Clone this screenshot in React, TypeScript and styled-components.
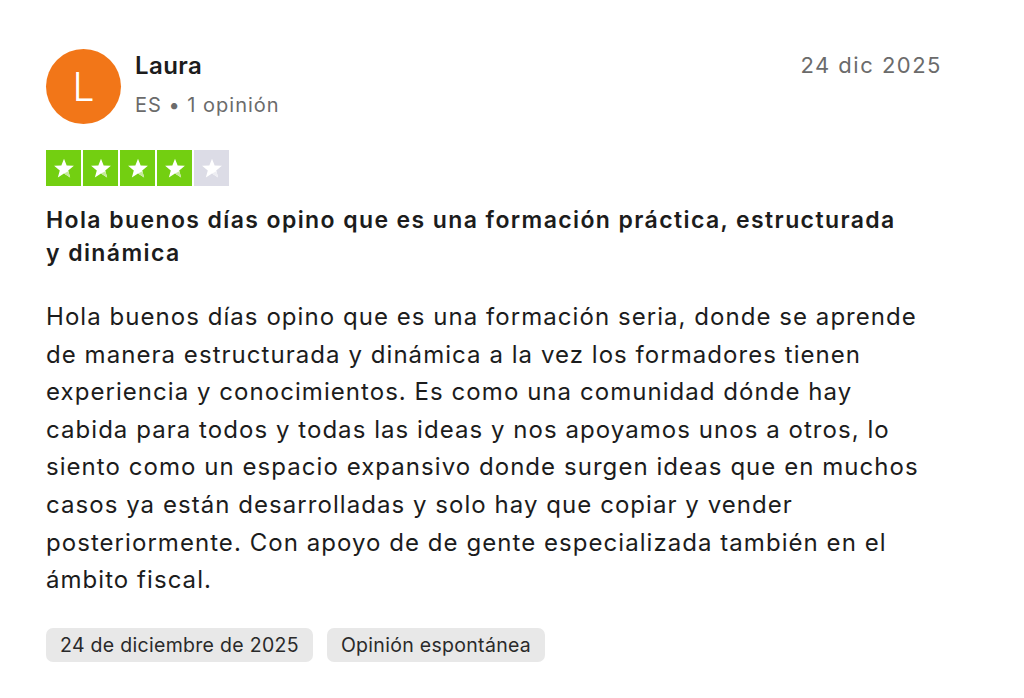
import styled, { createGlobalStyle } from "styled-components";

const GlobalStyle = createGlobalStyle`
  html, body {
    margin: 0;
    padding: 0;
    background: #fff;
  }
  body {
    font-family: Inter, "Noto Sans", "Liberation Sans", sans-serif;
    color: #1c1c1c;
  }
`;

const review = {
  name: "Laura",
  country: "ES",
  count: "1 opinión",
  date: "24 dic 2025",
  rating: 4,
  title: "Hola buenos días opino que es una formación práctica, estructurada y dinámica",
  body:
    "Hola buenos días opino que es una formación seria, donde se aprende de manera estructurada y dinámica a la vez los formadores tienen experiencia y conocimientos. Es como una comunidad dónde hay cabida para todos y todas las ideas y nos apoyamos unos a otros, lo siento como un espacio expansivo donde surgen ideas que en muchos casos ya están desarrolladas y solo hay que copiar y vender posteriormente. Con apoyo de de gente especializada también en el ámbito fiscal.",
  tags: ["24 de diciembre de 2025", "Opinión espontánea"],
};

export default function App() {
  return (
    <>
      <GlobalStyle />
      <Card>
        <Header>
          <Avatar>L</Avatar>
          <UserInfo>
            <Name>{review.name}</Name>
            <Meta>
              {review.country} • {review.count}
            </Meta>
          </UserInfo>
          <DateText>{review.date}</DateText>
        </Header>
        <Stars rating={review.rating} />
        <Title>{review.title}</Title>
        <Body>{review.body}</Body>
        <Tags>
          {review.tags.map((t) => (
            <Tag key={t}>{t}</Tag>
          ))}
        </Tags>
      </Card>
    </>
  );
}

const Card = styled.div`
  width: 896px;
  padding: 49px 0 0 46px;
`;

const Header = styled.div`
  display: flex;
  align-items: flex-start;
`;

const Avatar = styled.div`
  width: 75px;
  height: 75px;
  border-radius: 50%;
  background: #f27618;
  color: #fff;
  display: flex;
  align-items: center;
  justify-content: center;
  font-size: 39px;
  font-weight: 300;
  flex-shrink: 0;
`;

const UserInfo = styled.div`
  margin-left: 14px;
  flex-grow: 1;
  display: flex;
  flex-direction: column;
  gap: 9px;
`;

const Name = styled.div`
  font-size: 24px;
  font-weight: 600;
  line-height: 34px;
  letter-spacing: 0.4px;
  color: #1c1c1c;
`;

const Meta = styled.div`
  font-size: 20px;
  line-height: 26px;
  letter-spacing: 1px;
  color: #6b6b6b;
`;

const DateText = styled.div`
  font-size: 22px;
  line-height: 32px;
  letter-spacing: 1.5px;
  color: #6b6b6b;
`;

function Stars({ rating }: { rating: number }) {
  return (
    <StarRow>
      {[0, 1, 2, 3, 4].map((i) => {
        const on = i < rating;
        return (
          <StarBox key={i} $on={on}>
            <svg width="22" height="22" viewBox="0 0 24 24">
              <path
                d="M12 1.8l2.9 7.4 7.9.4-6.2 5 2.1 7.7L12 17.9l-6.7 4.4 2.1-7.7-6.2-5 7.9-.4z"
                fill="#fff"
              />
              <path
                d="M16.6 14.6l2.1 7.7L12 17.9l4.3-2.2z"
                fill={on ? "#c6ea9c" : "#eeeef3"}
              />
            </svg>
          </StarBox>
        );
      })}
    </StarRow>
  );
}

const StarRow = styled.div`
  display: flex;
  gap: 2px;
  margin-top: 26px;
`;

const StarBox = styled.div<{ $on: boolean }>`
  width: 35px;
  height: 36px;
  background: ${(p) => (p.$on ? "#73cf11" : "#dcdce6")};
  display: flex;
  align-items: center;
  justify-content: center;
`;

const Title = styled.h2`
  margin: 18px 0 0;
  max-width: 860px;
  font-size: 23px;
  font-weight: 600;
  line-height: 33px;
  letter-spacing: 1.4px;
  color: #1c1c1c;
`;

const Body = styled.p`
  margin: 28px 0 0;
  font-size: 24px;
  line-height: 37.6px;
  letter-spacing: 1.05px;
  color: #1c1c1c;
`;

const Tags = styled.div`
  display: flex;
  gap: 14px;
  margin-top: 29px;
`;

const Tag = styled.div`
  background: #e8e8e8;
  border-radius: 7px;
  padding: 0 14px;
  height: 34px;
  display: flex;
  align-items: center;
  font-size: 19.5px;
  letter-spacing: 0.3px;
  color: #2a2a2a;
`;
